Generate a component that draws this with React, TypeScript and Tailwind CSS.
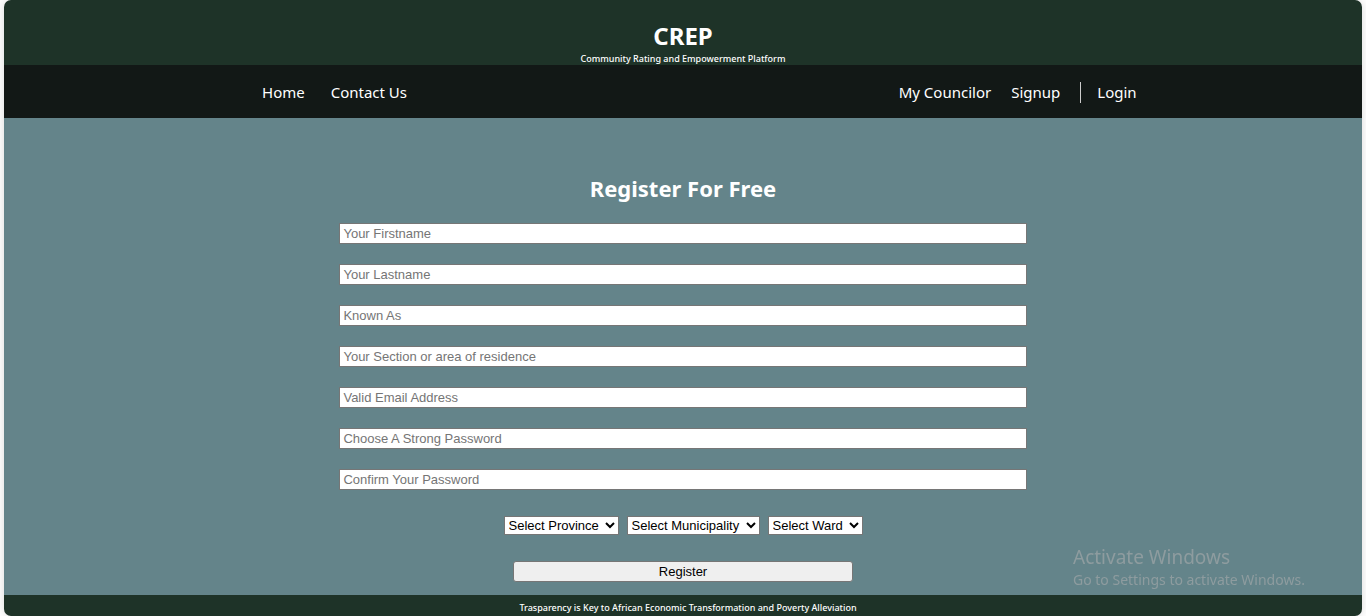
import React from "react";

type Field = { id: string; label: string; type: string };

const fields: Field[] = [
  { id: "firstname", label: "Your Firstname", type: "text" },
  { id: "lastname", label: "Your Lastname", type: "text" },
  { id: "known-as", label: "Known As", type: "text" },
  { id: "section", label: "Your Section or area of residence", type: "text" },
  { id: "email", label: "Valid Email Address", type: "email" },
  { id: "password", label: "Choose A Strong Password", type: "password" },
  { id: "confirm", label: "Confirm Your Password", type: "password" },
];

const selects = [
  { label: "Select Province", width: "w-[115px]" },
  { label: "Select Municipality", width: "w-[133px]" },
  { label: "Select Ward", width: "w-[95px]" },
];

function Header() {
  return (
    <header className="flex h-[65px] flex-col items-center bg-[#1e3328] pt-[20px] text-white">
      <h1 className="text-[24px] leading-[32px] font-bold">CREP</h1>
      <p className="text-[9px] leading-[14px] font-medium">Community Rating and Empowerment Platform</p>
    </header>
  );
}

function Nav() {
  return (
    <nav className="flex h-[53px] items-center justify-between bg-[#121816] pt-px pr-[16.6%] pl-[19%] text-[15px] text-white">
      <div className="flex gap-[26px]">
        <a href="#home">Home</a>
        <a href="#contact">Contact Us</a>
      </div>
      <div className="flex items-center">
        <a href="#councilor">My Councilor</a>
        <a href="#signup" className="ml-5">Signup</a>
        <a href="#login" className="ml-5 flex items-center">
          <span className="mr-4 h-[21px] w-px bg-[#cccccc]" />
          Login
        </a>
      </div>
    </nav>
  );
}

function RegisterForm() {
  return (
    <form
      className="flex flex-col items-center font-['Liberation_Sans',Arial,sans-serif] text-[13px] text-black"
      onSubmit={(e) => e.preventDefault()}
    >
      <div className="flex w-[50.6%] flex-col gap-5">
        {fields.map((f) => (
          <input
            key={f.id}
            id={f.id}
            type={f.type}
            aria-label={f.label}
            placeholder={f.label}
            className="h-[21px] w-full border border-[#767676] bg-white px-[3px] leading-[15px] placeholder:text-[#757575]"
          />
        ))}
      </div>
      <div className="mt-[26px] flex gap-2">
        {selects.map((s) => (
          <select key={s.label} aria-label={s.label} className={`h-[19px] border border-[#767676] bg-white ${s.width}`}>
            <option>{s.label}</option>
          </select>
        ))}
      </div>
      <button
        type="submit"
        className="mt-[26px] h-[21px] w-1/4 rounded-[3px] border border-[#767676] bg-[#efefef] leading-[15px]"
      >
        Register
      </button>
    </form>
  );
}

export default function App() {
  return (
    <div className="min-h-screen bg-white px-1 font-['Noto_Sans','Open_Sans',sans-serif]">
      <div className="overflow-hidden rounded-[7px] shadow-[0_0_10px_rgba(0,0,0,0.15)]">
        <Header />
        <Nav />
        <main className="bg-[#64848a] pt-[54px] pb-[13px]">
          <h2 className="mb-[19px] text-center text-[22px] leading-8 font-bold text-white">Register For Free</h2>
          <RegisterForm />
        </main>
        <footer className="bg-[#1e3328] pt-[7px] pb-[2px] pl-[10px] text-center text-[9px] leading-[12px] font-medium text-white">
          Trasparency is Key to African Economic Transformation and Poverty Alleviation
        </footer>
      </div>
      <aside className="pointer-events-none fixed right-[57px] bottom-[26px] w-[236px] whitespace-nowrap text-[#8e9c9f]">
        <p className="text-[19px] leading-[26px]">Activate Windows</p>
        <p className="text-[14px] leading-5">Go to Settings to activate Windows.</p>
      </aside>
    </div>
  );
}
